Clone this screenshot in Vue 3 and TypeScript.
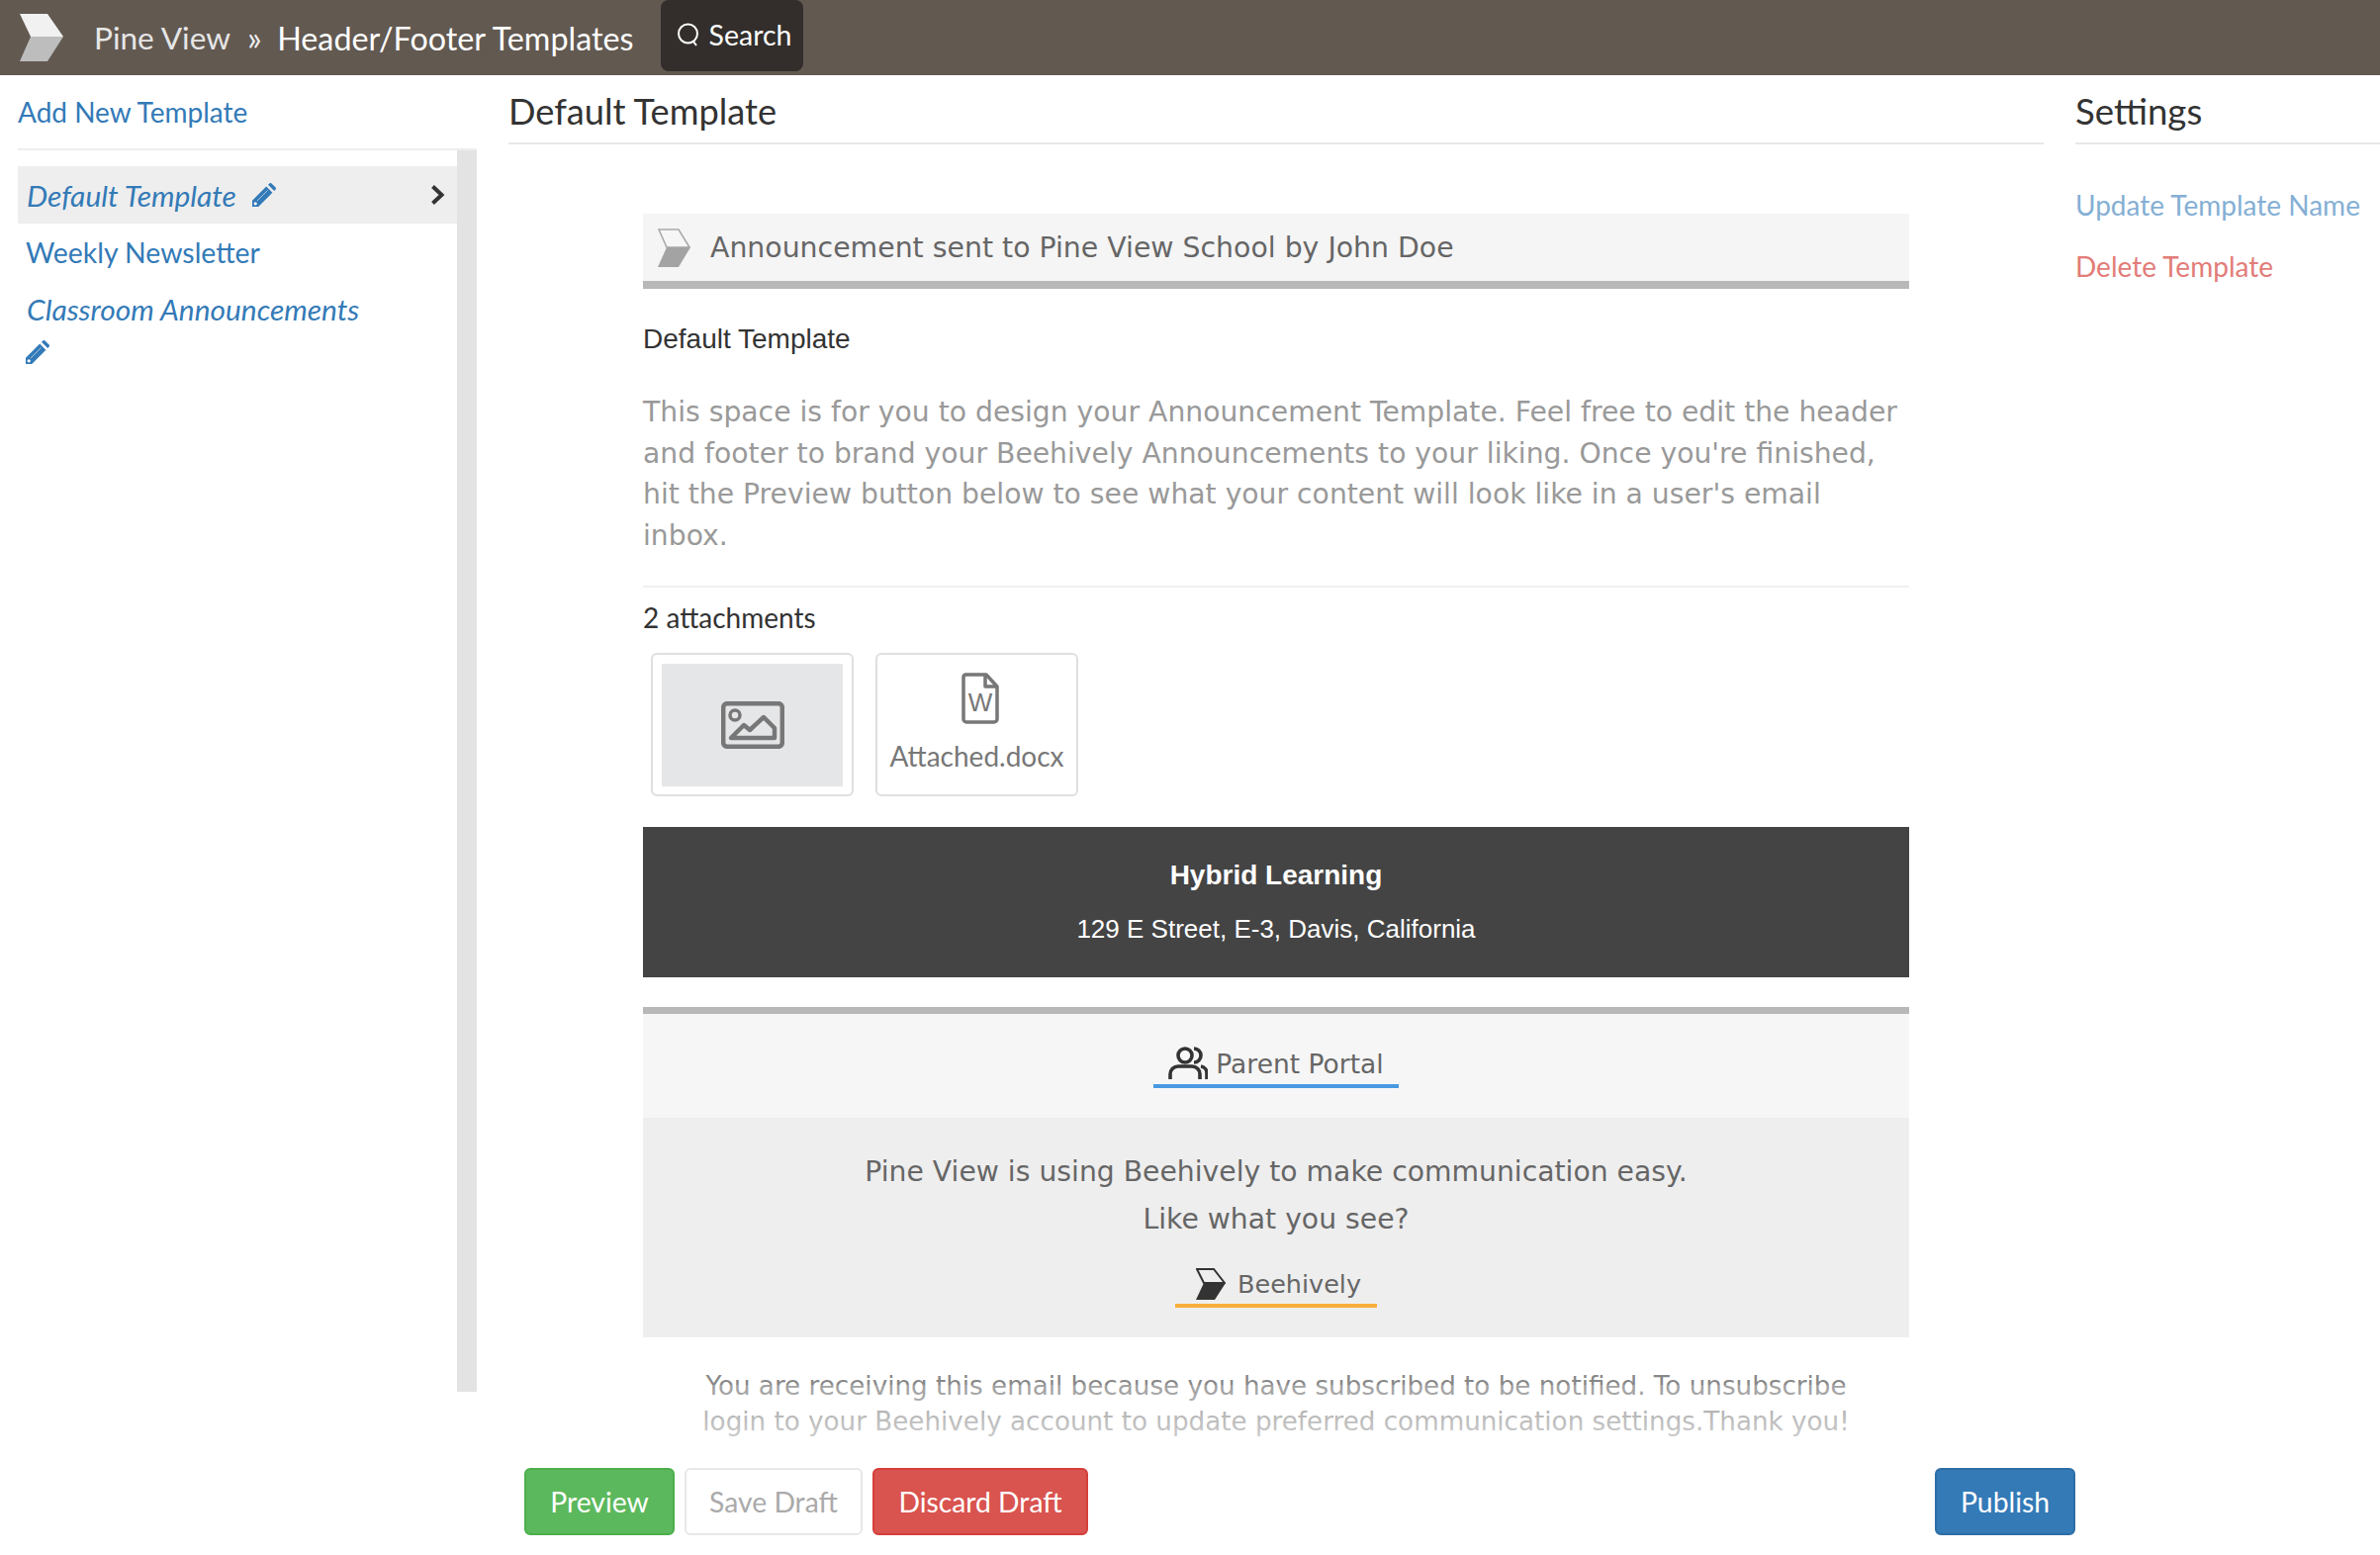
<script setup lang="ts">
const templates: { name: string; italic: boolean; active: boolean; wrap: boolean }[] = [
  { name: 'Default Template', italic: true, active: true, wrap: false },
  { name: 'Weekly Newsletter', italic: false, active: false, wrap: false },
  { name: 'Classroom Announcements', italic: true, active: false, wrap: true },
]
</script>

<template>
  <div class="page">
    <header class="topbar">
      <svg class="brand" viewBox="0 0 44 48">
        <polygon points="0,0 28,0 44,23 11,23" fill="#f1f1f1" />
        <polygon points="11,23 44,23 28,48 0,48" fill="#bdbdbd" />
      </svg>
      <span class="crumb-home">Pine View</span>
      <span class="crumb-sep">»</span>
      <span class="crumb-page">Header/Footer Templates</span>
      <button class="search">
        <svg class="search-icon" viewBox="0 0 24 26" fill="none" stroke="#fff" stroke-width="2">
          <circle cx="11.5" cy="12" r="9.5" />
          <path d="M17 20l3 4" />
        </svg>
        Search
      </button>
    </header>

    <div class="body">
      <aside class="left">
        <a class="add-new">Add New Template</a>
        <div class="left-list-wrap">
          <ul class="left-list">
            <li
              v-for="t in templates"
              :key="t.name"
              class="left-item"
              :class="{ active: t.active, italic: t.italic, wrap: t.wrap }"
            >
              <span class="left-name">{{ t.name }}</span>
              <svg v-if="t.italic" class="pencil" viewBox="0 0 24 24">
                <path fill="#337ab7" d="M0 24v-6.200L14.200 3.600l6.200 6.200L6.200 24zM16 1.800L17.400.4c.6-.6 1.500-.6 2.100 0l4.100 4.100c.6.6.6 1.500 0 2.100L22.200 8z" />
                <path stroke="#a9c8e3" stroke-width="1" fill="none" d="M5 18L15.500 7.500" />
                <circle cx="3.200" cy="20.800" r="1.600" fill="#fff" />
              </svg>
              <svg v-if="t.active" class="chev" viewBox="0 0 16 22" fill="none" stroke="#333" stroke-width="4">
                <path d="M2.500 2.500l9 8.500-9 8.500" />
              </svg>
            </li>
          </ul>
          <div class="left-scroll"></div>
        </div>
      </aside>

      <div class="right">
        <div class="right-top">
          <main class="main">
            <h1 class="title">Default Template</h1>
            <div class="email">
              <div class="mail-head">
                <svg class="mail-logo" viewBox="0 0 33 39">
                  <polygon points="1,1 21,1 32,19 9,19" fill="#f6f6f6" stroke="#aaa" stroke-width="1.600" />
                  <polygon points="9,19 33,19 21,39 0,39" fill="#a3a3a3" />
                </svg>
                <span>Announcement sent to Pine View School by John Doe</span>
              </div>
              <div class="mail-name">Default Template</div>
              <p class="mail-copy">This space is for you to design your Announcement Template. Feel free to edit the header and footer to brand your Beehively Announcements to your liking. Once you're finished, hit the Preview button below to see what your content will look like in a user's email inbox.</p>
              <div class="att-count">2 attachments</div>
              <div class="atts">
                <div class="att">
                  <div class="att-thumb">
                    <svg class="img-icon" viewBox="0 0 64 48" fill="none" stroke="#777" stroke-width="4.500">
                      <rect x="2.200" y="2.200" width="59.600" height="43.600" rx="4" />
                      <circle cx="14" cy="14" r="5" stroke-width="3.500" />
                      <path stroke-linejoin="round" d="M10 37l13-13 6 5 14-13 11 11v10z" />
                    </svg>
                  </div>
                </div>
                <div class="att">
                  <svg class="doc-icon" viewBox="0 0 38 52" fill="none" stroke="#777" stroke-width="3.500">
                    <path stroke-linejoin="round" d="M4 2h21L36 14v33a3 3 0 0 1-3 3H5a3 3 0 0 1-3-3V5a3 3 0 0 1 2-3z" />
                    <path stroke-linejoin="round" d="M24 2v12h12" />
                  </svg>
                  <span class="doc-w">W</span>
                  <span class="att-name">Attached.docx</span>
                </div>
              </div>
              <div class="dark">
                <div class="dark-title">Hybrid Learning</div>
                <div class="dark-addr">129 E Street, E-3, Davis, California</div>
              </div>
              <div class="portal">
                <a class="mail-link blue">
                  <svg class="people" viewBox="0 0 40 34" fill="none" stroke="#333" stroke-width="3.600">
                    <circle cx="17" cy="9" r="7" />
                    <path d="M2 33v-5a8 8 0 0 1 8-8h14a8 8 0 0 1 8 8v5M26 2a7 7 0 0 1 0 14M33 20a7 7 0 0 1 6 7v6" />
                  </svg>
                  Parent Portal
                </a>
              </div>
              <div class="promo">
                <div class="promo-line">Pine View is using Beehively to make communication easy.</div>
                <div class="promo-line">Like what you see?</div>
                <a class="mail-link orange">
                  <svg class="bee" viewBox="0 0 30 32">
                    <polygon points="1,1 18,1 29,15 8,15" fill="#eee" stroke="#333" stroke-width="2" />
                    <polygon points="8,15 30,15 19,32 0,32" fill="#333" />
                  </svg>
                  Beehively
                </a>
              </div>
              <p class="mail-foot">You are receiving this email because you have subscribed to be notified. To unsubscribe login to your Beehively account to update preferred communication settings.Thank you!</p>
            </div>
            <div class="fade"></div>
          </main>
          <aside class="settings">
            <h2 class="title settings-title">Settings</h2>
            <a class="set-link update">Update Template Name</a>
            <a class="set-link delete">Delete Template</a>
          </aside>
        </div>
        <div class="actions">
          <button class="btn green">Preview</button>
          <button class="btn plain">Save Draft</button>
          <button class="btn red">Discard Draft</button>
          <button class="btn blue-btn">Publish</button>
        </div>
      </div>
    </div>
  </div>
</template>

<style>
html, body { margin: 0; background: #fff; }
</style>

<style scoped>
.page {
  width: 2406px;
  height: 1572px;
  overflow: hidden;
  font-family: Lato, "Liberation Sans", sans-serif;
  color: #333;
  display: flex;
  flex-direction: column;
}
.topbar {
  height: 76px;
  flex: none;
  background: #625951;
  display: flex;
  align-items: center;
  padding-left: 20px;
  box-sizing: border-box;
}
.brand { width: 44px; height: 48px; margin-right: 31px; }
.crumb-home { font-size: 31.600px; color: #e6e6e6; }
.crumb-sep { font-size: 34px; line-height: 34px; color: #eee; margin: 0 15.500px 0 17px; }
.crumb-page { font-size: 32.300px; color: #fff; }
.search {
  margin: 0 0 4px 27px;
  width: 144px;
  height: 72px;
  border: 0;
  border-radius: 8px;
  background: #332e2b;
  color: #fff;
  font: 28.500px Lato, sans-serif;
  display: flex;
  align-items: center;
  justify-content: center;
  gap: 9px;
  padding: 0 0 2px 5px;
}
.search-icon { width: 24px; height: 26px; }

.body { flex: 1; display: flex; min-height: 0; }
.left { width: 464px; margin-left: 18px; flex: none; }
.add-new {
  display: block;
  height: 74px;
  line-height: 74px;
  font-size: 28px;
  color: #337ab7;
  border-bottom: 2px solid #eee;
}
.left-list-wrap { display: flex; height: 1255px; }
.left-list { flex: 1; list-style: none; margin: 0; padding: 16px 0 0; }
.left-item {
  min-height: 58px;
  display: flex;
  align-items: center;
  padding: 0 0 0 8px;
  font-size: 28.400px;
  color: #337ab7;
  position: relative;
}
.left-item.active { background: #eee; }
.left-item.italic { font-style: italic; padding-left: 9px; font-size: 29.900px; }
.left-item.wrap { flex-wrap: wrap; padding-top: 10px; }
.left-name { margin-right: 16px; }
.pencil { width: 24px; height: 24px; flex: none; }
.wrap .left-name { width: 100%; margin: 0 0 14px; line-height: 36px; }
.wrap .pencil { margin-left: -1px; }
.chev { width: 16px; height: 22px; position: absolute; right: 11px; top: 18px; }
.left-scroll { width: 20px; background: #e3e3e3; flex: none; }

.right { flex: 1; display: flex; flex-direction: column; min-width: 0; margin-left: 32px; }
.right-top { flex: none; height: 1382px; display: flex; overflow: hidden; }
.main { width: 1552px; flex: none; position: relative; overflow: hidden; }
.settings { margin-left: 32px; flex: 1; }
.title {
  margin: 0;
  height: 68px;
  line-height: 73px;
  font-size: 36.200px;
  font-weight: 400;
  color: #333;
  border-bottom: 2px solid #e8e8e8;
}
.settings-title { font-size: 36.600px; }
.set-link { display: block; font-size: 28px; }
.update { color: #85afd4; margin-top: 41px; line-height: 40px; }
.delete { color: #e27c78; margin-top: 22px; line-height: 40px; }

.email { width: 1280px; margin: 70px auto 0; }
.mail-head {
  height: 68px;
  background: #f5f5f5;
  border-bottom: 8px solid #b8b8b8;
  display: flex;
  align-items: center;
  padding-left: 15px;
  color: #666;
  font: 28.350px "DejaVu Sans", sans-serif;
}
.mail-logo { width: 33px; height: 39px; margin-right: 20px; }
.mail-name {
  margin-top: 31px;
  font: 28px/40px "Liberation Sans", sans-serif;
  color: #333;
}
.mail-copy {
  margin: 33px 0 0;
  padding-bottom: 30px;
  border-bottom: 2px solid #f0f0f0;
  font: 28.240px/41.600px "DejaVu Sans", sans-serif;
  color: #999;
}
.att-count { margin-top: 10px; font-size: 28px; line-height: 40px; color: #333; }
.atts { display: flex; gap: 22px; margin: 16px 0 0 8px; }
.att {
  width: 205px;
  height: 145px;
  box-sizing: border-box;
  border: 2px solid #dfdfdf;
  border-radius: 6px;
  padding: 9px;
  display: flex;
  flex-direction: column;
  align-items: center;
  position: relative;
}
.att-thumb {
  width: 183px;
  height: 124px;
  background: #e5e6e8;
  display: flex;
  align-items: center;
  justify-content: center;
  flex: none;
}
.img-icon { width: 64px; height: 48px; }
.doc-icon { width: 38px; height: 52px; margin: 9px 0 0 7px; flex: none; }
.doc-w {
  position: absolute;
  left: 7px;
  right: 0;
  top: 33px;
  text-align: center;
  font: 26px/30px "Liberation Sans", sans-serif;
  color: #777;
}
.att-name { margin-top: 14px; font-size: 28px; line-height: 36px; color: #777; white-space: nowrap; }
.dark {
  margin-top: 31px;
  height: 152px;
  box-sizing: border-box;
  padding-top: 29px;
  background: #444;
  color: #fff;
  text-align: center;
  font-family: "Liberation Sans", sans-serif;
}
.dark-title { font-size: 28px; font-weight: 700; line-height: 40px; }
.dark-addr { font-size: 26px; line-height: 40px; margin-top: 14px; }
.portal {
  margin-top: 30px;
  height: 112px;
  box-sizing: border-box;
  padding-top: 29px;
  border-top: 7px solid #b8b8b8;
  background: #f6f6f6;
  text-align: center;
}
.mail-link {
  display: inline-flex;
  align-items: center;
  justify-content: center;
  box-sizing: border-box;
  height: 46px;
  gap: 8px;
  color: #666;
  font: 26.500px "DejaVu Sans", sans-serif;
}
.mail-link.blue { width: 248px; border-bottom: 4px solid #4a9ae1; }
.mail-link.orange {
  width: 204px;
  height: 44px;
  margin-top: 21px;
  padding-left: 5px;
  border-bottom: 4px solid #f9ae3c;
  gap: 12px;
  font-size: 25.500px;
}
.people { width: 40px; height: 34px; }
.bee { width: 30px; height: 32px; }
.promo {
  height: 222px;
  box-sizing: border-box;
  padding-top: 31px;
  background: #eee;
  text-align: center;
}
.promo-line { font: 28.260px/48px "DejaVu Sans", sans-serif; color: #666; }
.mail-foot {
  margin: 31px auto 0;
  width: 1200px;
  text-align: center;
  font: 26.200px/36px "DejaVu Sans", sans-serif;
  color: #888;
}
.fade {
  position: absolute;
  left: 0;
  right: 0;
  bottom: 0;
  height: 58px;
  background: linear-gradient(to bottom, rgba(255, 255, 255, 0.2), rgba(255, 255, 255, 0.6));
}

.actions {
  flex: none;
  display: flex;
  align-items: flex-start;
  padding: 26px 308px 0 16px;
  gap: 10px;
}
.btn {
  height: 68px;
  box-sizing: border-box;
  border-radius: 6px;
  font: 28.300px Lato, sans-serif;
  padding: 0;
  color: #fff;
}
.green { width: 152px; background: #5cb85c; border: 2px solid #4cae4c; }
.plain { width: 180px; background: #fff; border: 2px solid #e8e8e8; color: #aaa; }
.red { width: 218px; background: #d9534f; border: 2px solid #d43f3a; }
.blue-btn { width: 142px; margin-left: auto; background: #337ab7; border: 2px solid #2e6da4; }
</style>
